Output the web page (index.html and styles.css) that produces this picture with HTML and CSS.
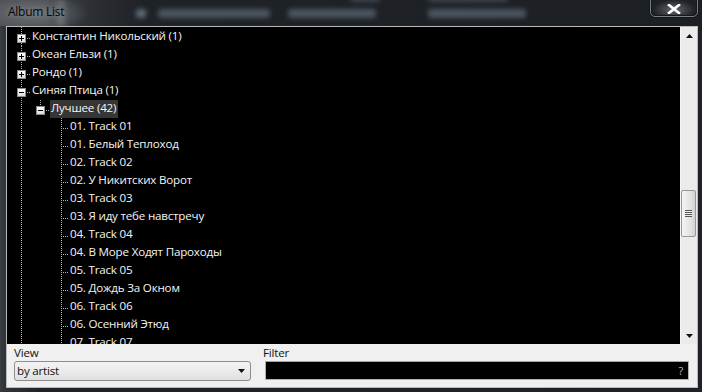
FILE: index.html
```html
<!DOCTYPE html>
<html>
<head>
<meta charset="utf-8">
<link rel="stylesheet" href="styles.css">
</head>
<body>
<div class="window">
  <div class="titlebar">
    <div class="ghosts">
      <span class="gh gh1"></span><span class="gh gh2"></span><span class="gh gh3"></span><span class="gh gh4"></span><span class="gh gh5"></span><span class="gh gh6"></span>
    </div>
    <span class="streak"></span>
    <span class="title">Album List</span>
    <div class="close">
      <svg width="14" height="10" viewBox="0 0 14 10"><path d="M2 1 L12 9 M12 1 L2 9" stroke="#fff" stroke-width="2.6" stroke-linecap="square"/></svg>
    </div>
  </div>
  <div class="client">
    <div class="treebox">
      <div class="tree">
        <div class="row"><span class="c c1 first"><i class="box plus"></i></span><span class="lbl">Константин Никольский (1)</span></div>
        <div class="row"><span class="c c1"><i class="box plus"></i></span><span class="lbl">Океан Ельзи (1)</span></div>
        <div class="row"><span class="c c1"><i class="box plus"></i></span><span class="lbl">Рондо (1)</span></div>
        <div class="row"><span class="c c1"><i class="box minus"></i></span><span class="lbl">Синяя Птица (1)</span></div>
        <div class="row"><span class="g col1 line"></span><span class="c c2 last"><i class="box minus"></i></span><span class="lbl sel">Лучшее (42)</span></div>
        <div class="row"><span class="g col1 line"></span><span class="g col2"></span><span class="c c3"></span><span class="lbl">01. Track 01</span></div>
        <div class="row"><span class="g col1 line"></span><span class="g col2"></span><span class="c c3"></span><span class="lbl">01. Белый Теплоход</span></div>
        <div class="row"><span class="g col1 line"></span><span class="g col2"></span><span class="c c3"></span><span class="lbl">02. Track 02</span></div>
        <div class="row"><span class="g col1 line"></span><span class="g col2"></span><span class="c c3"></span><span class="lbl">02. У Никитских Ворот</span></div>
        <div class="row"><span class="g col1 line"></span><span class="g col2"></span><span class="c c3"></span><span class="lbl">03. Track 03</span></div>
        <div class="row"><span class="g col1 line"></span><span class="g col2"></span><span class="c c3"></span><span class="lbl">03. Я иду тебе навстречу</span></div>
        <div class="row"><span class="g col1 line"></span><span class="g col2"></span><span class="c c3"></span><span class="lbl">04. Track 04</span></div>
        <div class="row"><span class="g col1 line"></span><span class="g col2"></span><span class="c c3"></span><span class="lbl">04. В Море Ходят Пароходы</span></div>
        <div class="row"><span class="g col1 line"></span><span class="g col2"></span><span class="c c3"></span><span class="lbl">05. Track 05</span></div>
        <div class="row"><span class="g col1 line"></span><span class="g col2"></span><span class="c c3"></span><span class="lbl">05. Дождь За Окном</span></div>
        <div class="row"><span class="g col1 line"></span><span class="g col2"></span><span class="c c3"></span><span class="lbl">06. Track 06</span></div>
        <div class="row"><span class="g col1 line"></span><span class="g col2"></span><span class="c c3"></span><span class="lbl">06. Осенний Этюд</span></div>
        <div class="row"><span class="g col1 line"></span><span class="g col2"></span><span class="c c3"></span><span class="lbl">07. Track 07</span></div>
      </div>
      <div class="vscroll">
        <div class="sbtn"><svg width="7" height="4" viewBox="0 0 7 4"><path d="M0 4 L3.5 0 L7 4 Z" fill="#111"/></svg></div>
        <div class="track">
          <div class="thumb"><span class="grip"></span></div>
        </div>
        <div class="sbtn"><svg width="7" height="4" viewBox="0 0 7 4"><path d="M0 0 L7 0 L3.5 4 Z" fill="#111"/></svg></div>
      </div>
    </div>
    <div class="panel">
      <label class="plabel">View</label>
      <label class="plabel flabel">Filter</label>
      <div class="combo"><span>by artist</span><svg width="7" height="4" viewBox="0 0 7 4"><path d="M0 0 L7 0 L3.5 4 Z" fill="#111"/></svg></div>
      <div class="finput"><span class="q">?</span></div>
    </div>
  </div>
</div>
</body>
</html>
```
FILE: styles.css
```css
html, body {
  margin: 0;
  padding: 0;
}
body {
  width: 702px;
  height: 392px;
  overflow: hidden;
  background: #1f2226;
  font-family: "Open Sans", "Noto Sans", "DejaVu Sans", sans-serif;
  font-size: 11.6px;
  letter-spacing: -0.2px;
}
.window {
  display: flex;
  flex-direction: column;
  height: 392px;
  background: linear-gradient(to right, #3a3e43 0, #30343a 5px, #1f2327 40px, #1e2125 100%);
}
.titlebar {
  position: relative;
  height: 26px;
  flex: none;
  overflow: hidden;
  background:
    radial-gradient(ellipse 55px 18px at 34px 13px, rgba(130,134,138,0.7), rgba(130,134,138,0) 100%),
    linear-gradient(to right, #4c5055 0, #474b50 45px, #2c3035 90px, #1f2327 140px, #1c1f23 100%);
}
.ghosts {
  position: absolute;
  inset: 0;
  filter: blur(2.5px);
}
.gh {
  position: absolute;
  background: #4b5560;
  border-radius: 3px;
}
.gh1 { left: 136px; top: 9px; width: 10px; height: 9px; background: #5f6a75; }
.gh2 { left: 158px; top: 9px; width: 112px; height: 9px; }
.gh3 { left: 288px; top: 9px; width: 88px; height: 9px; }
.gh4 { left: 428px; top: 9px; width: 98px; height: 9px; }
.gh5 { left: 428px; top: -5px; width: 80px; height: 7px; background: #3c454e; }
.gh6 { left: 350px; top: -5px; width: 30px; height: 7px; background: #3c454e; }
.streak {
  position: absolute;
  left: 54px;
  top: 0;
  width: 14px;
  height: 26px;
  background: linear-gradient(to right, rgba(150,155,160,0), rgba(150,155,160,0.45), rgba(150,155,160,0));
  filter: blur(2px);
}
.title {
  position: relative;
  display: block;
  padding-left: 8px;
  line-height: 24px;
  font-size: 12px;
  letter-spacing: -0.25px;
  color: #050505;
  text-shadow: 0 0 5px rgba(150,150,150,0.7);
}
.close {
  position: absolute;
  left: 650px;
  top: -3px;
  width: 48px;
  height: 20px;
  box-sizing: border-box;
  border: 1px solid #7a7f84;
  border-radius: 0 0 5px 5px;
  box-shadow: inset 0 0 0 1px #15181b, 0 0 0 1px #15181b;
  background: radial-gradient(ellipse 22px 10px at 50% 65%, #62676b, #2a2e33 80%, #1d2024);
  display: flex;
  align-items: center;
  justify-content: center;
  padding-top: 3px;
}
.client {
  flex: none;
  height: 362px;
  width: 692px;
  margin-left: 6px;
  box-sizing: border-box;
  border: 1px solid #b8babc;
  display: flex;
  flex-direction: column;
}
.treebox {
  height: 317px;
  flex: none;
  display: flex;
}
.tree {
  flex: 1;
  background: #000;
  overflow: hidden;
  padding: 1px 0 0 4px;
}
.row {
  display: flex;
  height: 18px;
}
.c, .g {
  position: relative;
  flex: none;
  height: 18px;
}
.c1, .col1 { width: 20px; }
.c2, .col2 { width: 19px; }
.c3 { width: 19px; }
.g.line::before, .c::before {
  content: "";
  position: absolute;
  top: 0;
  bottom: 0;
  width: 1px;
  background: repeating-linear-gradient(to bottom, #b4b4b4 0 1px, transparent 1px 2px);
}
.col1.line::before, .c1::before { left: 10px; }
.c2::before { left: 9px; }
.c3::before { left: 11px; }
.c.first::before { top: -1px; }
.c.last::before { bottom: 8px; }
.c::after {
  content: "";
  position: absolute;
  top: 10px;
  right: 1px;
  height: 1px;
  background: repeating-linear-gradient(to right, #b4b4b4 0 1px, transparent 1px 2px);
}
.c1::after { left: 10px; }
.c2::after { left: 9px; }
.c3::after { left: 11px; }
.box {
  position: absolute;
  top: 6px;
  width: 9px;
  height: 9px;
  box-sizing: border-box;
  border: 1px solid #8c8c8c;
  background: linear-gradient(#ffffff, #dcdcdc);
  z-index: 1;
}
.c1 .box { left: 6px; }
.c2 .box { left: 5px; }
.box::before {
  content: "";
  position: absolute;
  left: 1px;
  top: 3px;
  width: 5px;
  height: 1px;
  background: #000;
}
.box.plus::after {
  content: "";
  position: absolute;
  left: 3px;
  top: 1px;
  width: 1px;
  height: 5px;
  background: #000;
}
.lbl {
  color: #f4f4f4;
  line-height: 16px;
  height: 18px;
  padding: 0 2px 0 1px;
  white-space: nowrap;
}
.lbl.sel {
  background: #363636;
}
.vscroll {
  width: 17px;
  flex: none;
  background: #ebebeb;
  display: flex;
  flex-direction: column;
  border-left: 1px solid #f6f6f6;
  box-sizing: border-box;
}
.sbtn {
  height: 17px;
  flex: none;
  display: flex;
  align-items: center;
  justify-content: center;
}
.track {
  flex: 1;
  padding-top: 146px;
}
.thumb {
  width: 15px;
  height: 47px;
  box-sizing: border-box;
  border: 1px solid #979797;
  border-radius: 2px;
  background: linear-gradient(to right, #f4f4f4, #e6e6e6 55%, #d2d2d2);
  display: flex;
  align-items: center;
  justify-content: center;
}
.grip {
  width: 7px;
  height: 7px;
  background: repeating-linear-gradient(to bottom, #555 0 1px, #eee 1px 2px);
}
.panel {
  height: 43px;
  flex: none;
  box-sizing: border-box;
  background: #f0f0f0;
  padding: 1px 8px 0 7px;
  display: grid;
  grid-template-columns: 237px 1fr;
  grid-template-rows: 16px 20px;
  column-gap: 14px;
}
.plabel {
  line-height: 16px;
  color: #111;
}
.flabel {
  margin-left: -2px;
}
.combo {
  box-sizing: border-box;
  height: 20px;
  border: 1px solid #8d8d8d;
  border-radius: 3px;
  background: linear-gradient(#f3f3f3, #ebebeb 50%, #e0e0e0);
  display: flex;
  align-items: center;
  justify-content: space-between;
  padding: 0 5px 0 2px;
  color: #111;
}
.combo span {
  line-height: 18px;
}
.finput {
  box-sizing: border-box;
  height: 19px;
  border: 1px solid #b0b0b0;
  border-top-color: #a4a4a4;
  background: #000;
  display: flex;
  justify-content: flex-end;
  align-items: center;
  padding-right: 5px;
}
.q {
  color: #bdbdbd;
  font-size: 11px;
  line-height: 16px;
}
```
